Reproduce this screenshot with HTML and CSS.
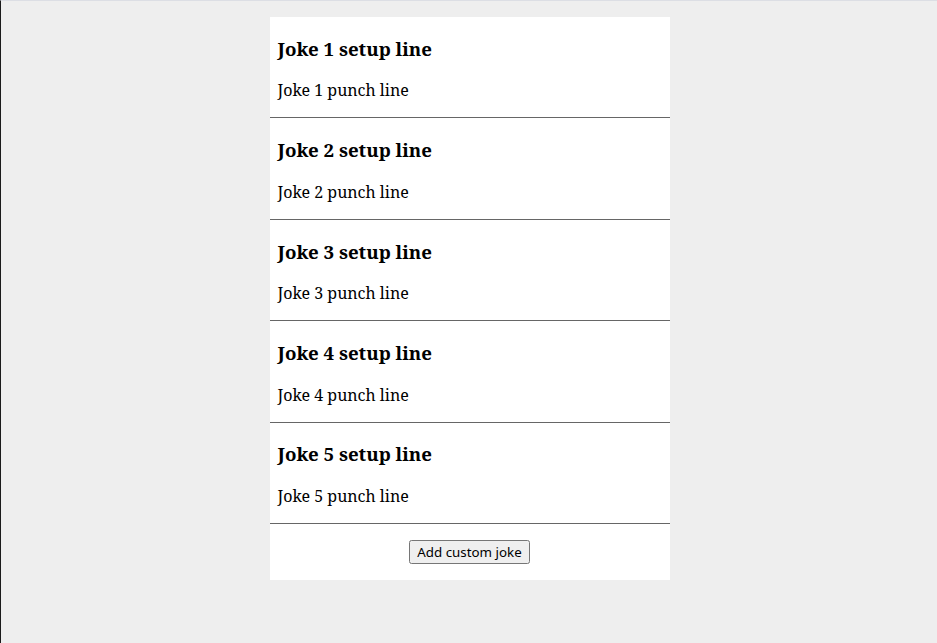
FILE: index.html
```html
<!DOCTYPE html>
<html>
<head>
<meta charset="utf-8">
<link rel="stylesheet" href="styles.css">
</head>
<body>
<div class="page">
  <div class="card">
    <div class="joke">
      <h3 class="setup">Joke 1 setup line</h3>
      <p class="punch">Joke 1 punch line</p>
    </div>
    <div class="joke">
      <h3 class="setup">Joke 2 setup line</h3>
      <p class="punch">Joke 2 punch line</p>
    </div>
    <div class="joke">
      <h3 class="setup">Joke 3 setup line</h3>
      <p class="punch">Joke 3 punch line</p>
    </div>
    <div class="joke">
      <h3 class="setup">Joke 4 setup line</h3>
      <p class="punch">Joke 4 punch line</p>
    </div>
    <div class="joke">
      <h3 class="setup">Joke 5 setup line</h3>
      <p class="punch">Joke 5 punch line</p>
    </div>
    <div class="actions">
      <button class="add-btn">Add custom joke</button>
    </div>
  </div>
</div>
</body>
</html>
```

FILE: styles.css
```css
html {
  background: #eeeeee;
  border-top: 1px solid #dcdee4;
  border-left: 1px solid #1a1a1a;
  min-height: 100%;
  box-sizing: border-box;
}
body {
  margin: 0;
  font-family: "Noto Serif", "DejaVu Serif", serif;
  color: #000;
}
.page {
  display: flex;
  justify-content: center;
  padding-top: 16px;
  padding-left: 1px;
}
.card {
  width: 400px;
  background: #fff;
}
.joke {
  padding: 0 8px;
  border-bottom: 1px solid #666;
  display: flow-root;
}
.setup {
  font-size: 18.72px;
  font-weight: bold;
  margin: 18.72px 0;
}
.punch {
  font-size: 16px;
  margin: 16px 0;
}
.actions {
  display: flex;
  justify-content: center;
  padding: 16px 0 16px;
}
.add-btn {
  font-family: "Noto Sans", "Open Sans", sans-serif;
  font-size: 13.33px;
}
```
